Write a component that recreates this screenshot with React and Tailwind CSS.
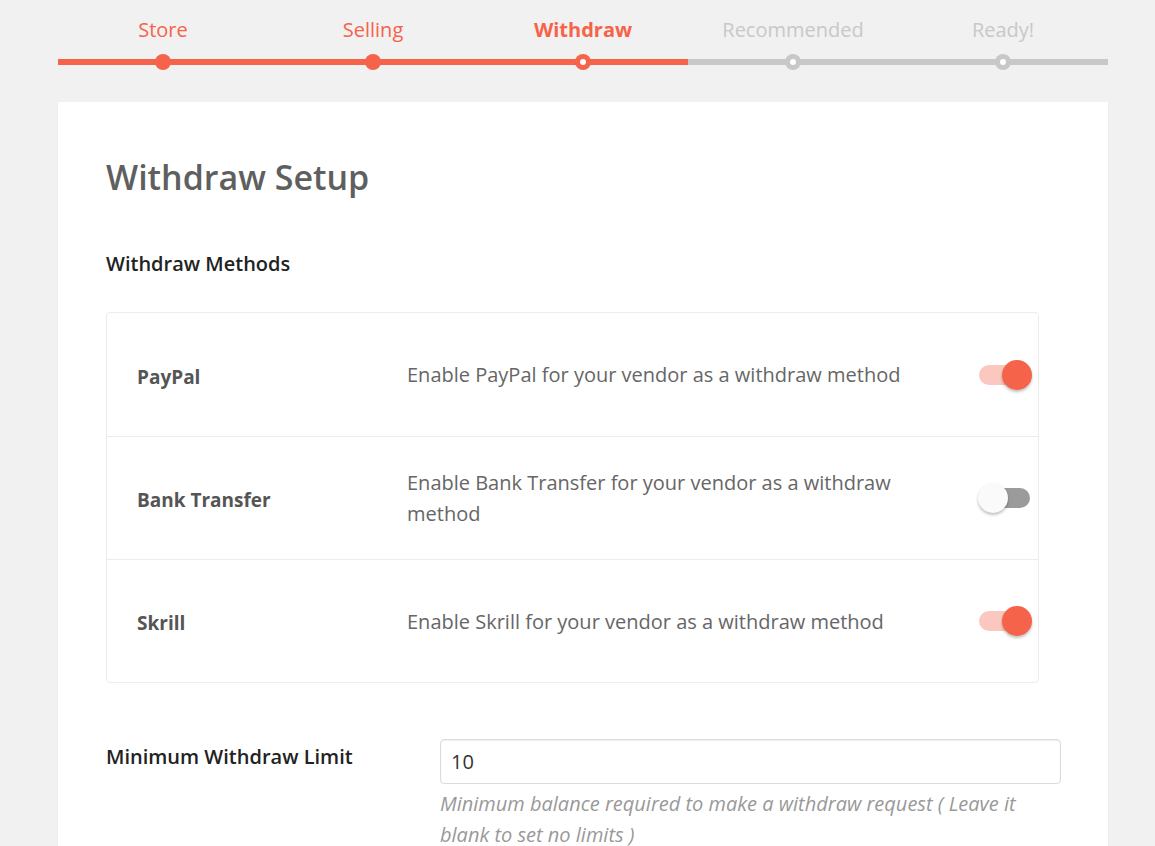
import React, { useState } from 'react';

const steps = [
  { label: 'Store', state: 'done' },
  { label: 'Selling', state: 'done' },
  { label: 'Withdraw', state: 'active' },
  { label: 'Recommended', state: 'todo' },
  { label: 'Ready!', state: 'todo' },
];

const Toggle = ({ on, onChange }) => (
  <button
    onClick={onChange}
    className="relative flex h-[30px] w-[54px] items-center"
  >
    <span
      className={`absolute left-[1px] right-[2px] h-[20px] rounded-full ${on ? 'bg-[#fbc8bf]' : 'bg-[#9b9b9b]'}`}
    ></span>
    <span
      className={`absolute top-0 h-[30px] w-[30px] rounded-full shadow-[0_2px_3px_rgba(0,0,0,0.25)] ${on ? 'right-0 bg-[#f5634a]' : 'left-0 bg-[#fafafa]'}`}
    ></span>
  </button>
);

const StepBar = () => (
  <div className="ml-[58px] flex w-[1050px]">
    {steps.map((step) => (
      <div key={step.label} className="flex w-[210px] shrink-0 flex-col items-center">
        <div
          className={`h-[54px] pt-[15px] text-[20px] leading-[30px] ${
            step.state === 'todo' ? 'text-[#c8c8c8]' : 'text-[#f5634a]'
          } ${step.state === 'active' ? 'font-bold' : ''}`}
        >
          {step.label}
        </div>
        <div className="relative flex h-[16px] w-full items-center justify-center">
          <div
            className={`absolute left-0 right-0 h-[6px] ${
              step.state === 'todo' ? 'bg-[#c8c8c8]' : 'bg-[#f5634a]'
            }`}
          ></div>
          <div
            className={`relative flex h-[16px] w-[16px] items-center justify-center rounded-full ${
              step.state === 'todo' ? 'bg-[#c8c8c8]' : 'bg-[#f5634a]'
            }`}
          >
            {step.state !== 'done' && <div className="h-[6px] w-[6px] rounded-full bg-white"></div>}
          </div>
        </div>
      </div>
    ))}
  </div>
);

export default function App() {
  const [methods, setMethods] = useState([
    { name: 'PayPal', desc: 'Enable PayPal for your vendor as a withdraw method', on: true },
    { name: 'Bank Transfer', desc: 'Enable Bank Transfer for your vendor as a withdraw method', on: false },
    { name: 'Skrill', desc: 'Enable Skrill for your vendor as a withdraw method', on: true },
  ]);
  const [limit, setLimit] = useState('10');

  const toggle = (idx) =>
    setMethods((prev) => prev.map((m, i) => (i === idx ? { ...m, on: !m.on } : m)));

  return (
    <div
      className="h-[846px] overflow-hidden bg-[#f1f1f1]"
      style={{ fontFamily: '"Open Sans", "Noto Sans", sans-serif' }}
    >
      <StepBar />

      <div className="ml-[58px] mt-[32px] w-[1050px] bg-white px-[48px] pb-[40px] pt-[50px] shadow-[0_1px_2px_rgba(0,0,0,0.05)]">
        <h1 className="text-[34px] font-semibold leading-[50px] text-[#5f5f5f]">Withdraw Setup</h1>

        <h2 className="mt-[49px] text-[20px] font-semibold leading-[26px] text-[#222]">Withdraw Methods</h2>

        <div className="mt-[35px] w-[933px] rounded-[4px] border border-[#ececec]">
          {methods.map((m, i) => (
            <div
              key={m.name}
              className={`flex h-[123px] items-center pl-[30px] pr-[6px] ${i > 0 ? 'border-t border-[#ececec]' : ''}`}
            >
              <div className="w-[270px] shrink-0 pt-[5px] text-[19px] font-bold text-[#555]">{m.name}</div>
              <div className="w-[520px] shrink-0 text-[20px] leading-[31px] text-[#666]">{m.desc}</div>
              <div className="ml-auto">
                <Toggle on={m.on} onChange={() => toggle(i)} />
              </div>
            </div>
          ))}
        </div>

        <div className="mt-[56px] flex">
          <label className="w-[334px] shrink-0 pt-[3px] text-[20px] font-semibold leading-[30px] text-[#222]">
            Minimum Withdraw Limit
          </label>
          <div className="w-[621px] shrink-0">
            <input
              value={limit}
              onChange={(e) => setLimit(e.target.value)}
              className="h-[45px] w-full rounded-[4px] border border-[#dcdcdc] px-[10px] text-[20px] text-[#333] shadow-[inset_0_1px_2px_rgba(0,0,0,0.07)] outline-none"
            />
            <p className="mt-[4px] text-[20px] italic leading-[31px] text-[#999]">
              Minimum balance required to make a withdraw request ( Leave it blank to set no limits )
            </p>
          </div>
        </div>
      </div>
    </div>
  );
}
